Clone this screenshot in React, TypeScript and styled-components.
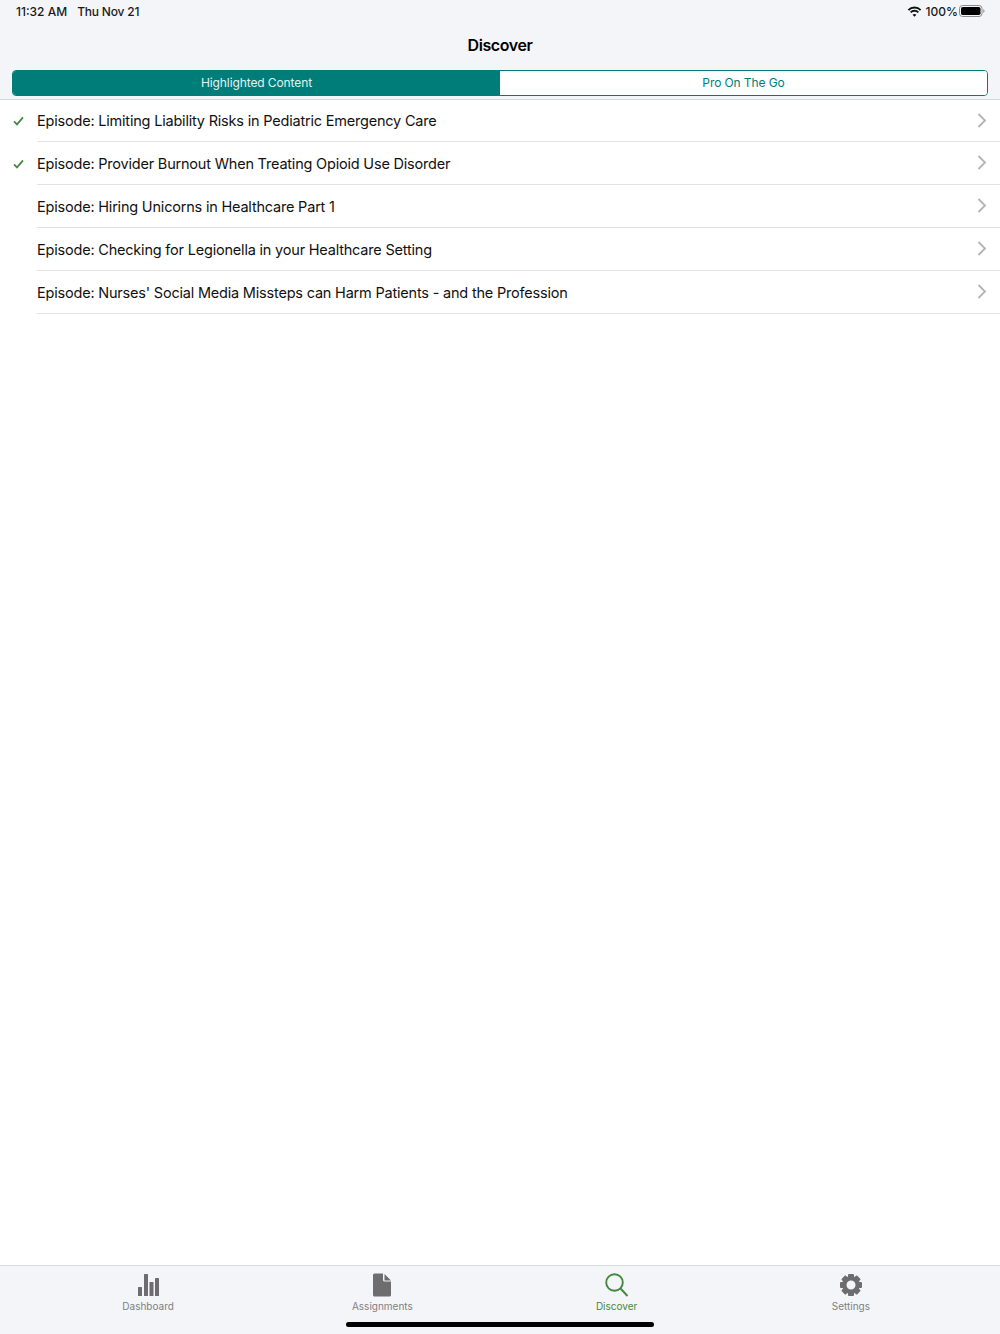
import React from 'react';
import styled, { createGlobalStyle } from 'styled-components';

const TEAL = '#007d78';
const GREEN = '#44883e';
const GREY = '#6d6d6f';

const GlobalStyle = createGlobalStyle`
  html, body {
    margin: 0;
    padding: 0;
    background: #fff;
  }
  body {
    font-family: Inter, "Noto Sans", "Liberation Sans", sans-serif;
    color: #111;
  }
`;

const Screen = styled.div`
  width: 1000px;
  height: 1334px;
  display: flex;
  flex-direction: column;
  overflow: hidden;
`;

const Header = styled.header`
  height: 99px;
  background: #f4f5f9;
  border-bottom: 1px solid #d9d9dc;
  display: flex;
  flex-direction: column;
  flex-shrink: 0;
`;

const StatusBar = styled.div`
  height: 22px;
  padding: 0 15px 0 16px;
  display: flex;
  align-items: center;
  justify-content: space-between;
  font-size: 12px;
  font-weight: 500;
  color: #1a1a1a;
`;

const StatusLeft = styled.div`
  display: flex;
  gap: 10px;
`;

const StatusDate = styled.span`
  letter-spacing: -0.2px;
`;

const StatusRight = styled.div`
  display: flex;
  align-items: center;
  gap: 1px;
`;

const WifiIcon = styled.svg`
  width: 15px;
  height: 11px;
  margin-right: 3px;
`;

const NavTitle = styled.h1`
  margin: 0;
  height: 46px;
  line-height: 46px;
  text-align: center;
  font-size: 16px;
  font-weight: 600;
  letter-spacing: -0.4px;
  color: #000;
`;

const Segments = styled.div`
  margin: 2px 12px 0;
  height: 26px;
  display: grid;
  grid-template-columns: 1fr 1fr;
  border-radius: 4px;
  overflow: hidden;
  border: 1px solid ${TEAL};
  box-sizing: border-box;
`;

const Segment = styled.div<{ $active?: boolean }>`
  display: flex;
  align-items: center;
  justify-content: center;
  padding-bottom: 1px;
  font-size: 12px;
  letter-spacing: -0.1px;
  background: ${(p) => (p.$active ? TEAL : '#fff')};
  color: ${(p) => (p.$active ? '#e4f2f1' : TEAL)};
`;

const List = styled.ul`
  list-style: none;
  margin: 0;
  padding: 0;
  flex: 1;
  background: #fff;
`;

const Row = styled.li`
  height: 43px;
  display: flex;
  align-items: stretch;

  &:first-child {
    height: 42px;
  }
`;

const CheckSlot = styled.div`
  width: 37px;
  flex-shrink: 0;
  padding-left: 13px;
  box-sizing: border-box;
  display: flex;
  align-items: center;
`;

const RowBody = styled.div`
  flex: 1;
  display: flex;
  align-items: center;
  justify-content: space-between;
  padding-right: 13px;
  border-bottom: 1px solid #e2e2e4;
  box-sizing: border-box;
`;

const RowTitle = styled.span`
  font-size: 14.5px;
  letter-spacing: -0.2px;
  color: #111;
`;

const TabBar = styled.nav`
  height: 69px;
  flex-shrink: 0;
  background: #f4f5f9;
  border-top: 1px solid #dcdde0;
  box-sizing: border-box;
  display: flex;
  flex-direction: column;
  align-items: center;
`;

const Tabs = styled.div`
  width: 100%;
  padding: 7px 32px 0 31px;
  box-sizing: border-box;
  display: grid;
  grid-template-columns: repeat(4, 1fr);
`;

const Tab = styled.div<{ $active?: boolean }>`
  display: flex;
  flex-direction: column;
  align-items: center;
  gap: 3px;
  font-size: 10px;
  line-height: 13px;
  color: ${(p) => (p.$active ? GREEN : '#808083')};
`;

const TabIcon = styled.svg`
  width: 26px;
  height: 24px;
  display: block;
`;

const HomeBar = styled.div`
  width: 308px;
  height: 5px;
  margin-top: 9px;
  border-radius: 3px;
  background: #000;
`;

const Check = () => (
  <svg width="11" height="10" viewBox="0 0 11 10" fill="none">
    <path d="M1 5.4 4 8.4 10 1.4" stroke={GREEN} strokeWidth="1.7" />
  </svg>
);

const Chevron = () => (
  <svg width="10" height="16" viewBox="0 0 10 16" fill="none">
    <path d="M1.5 1 8 7.500 1.500 14" stroke="#b3b3b8" strokeWidth="1.8" />
  </svg>
);

const Wifi = () => (
  <WifiIcon viewBox="0 0 15 11" fill="#111">
    <path d="M7.5 2.6c2.1 0 4 .8 5.4 2.2l1.4-1.4A9.4 9.4 0 0 0 7.500.5 9.400 9.400 0 0 0 .7 3.400l1.400 1.400A7.700 7.700 0 0 1 7.500 2.600z" />
    <path d="M7.500 5.700c1.200 0 2.300.5 3.200 1.300l1.300-1.300a6.300 6.300 0 0 0-9 0L4.300 7c.9-.8 2-1.300 3.200-1.300z" />
    <path d="M7.500 7.900c-.7 0-1.300.3-1.900.8l1.900 2 1.900-2c-.6-.5-1.200-.8-1.900-.8z" />
  </WifiIcon>
);

const Battery = () => (
  <svg width="26" height="12" viewBox="0 0 26 12">
    <rect x="0.5" y="0.5" width="22.500" height="11" rx="3" fill="none" stroke="#8b8b8d" />
    <rect x="2" y="2" width="19.500" height="8" rx="1.700" fill="#000" />
    <path d="M24.300 4.200c.8.300 1.200 1 1.200 1.800s-.4 1.500-1.200 1.800z" fill="#8b8b8d" />
  </svg>
);

const gearTeeth = [0, 45, 90, 135, 180, 225, 270, 315];

const episodes = [
  { title: 'Episode: Limiting Liability Risks in Pediatric Emergency Care', done: true },
  { title: 'Episode: Provider Burnout When Treating Opioid Use Disorder', done: true },
  { title: 'Episode: Hiring Unicorns in Healthcare Part 1', done: false },
  { title: 'Episode: Checking for Legionella in your Healthcare Setting', done: false },
  { title: "Episode: Nurses' Social Media Missteps can Harm Patients - and the Profession", done: false },
];

const App: React.FC = () => {
  return (
    <Screen>
      <GlobalStyle />
      <Header>
        <StatusBar>
          <StatusLeft>
            <span>11:32 AM</span>
            <StatusDate>Thu Nov 21</StatusDate>
          </StatusLeft>
          <StatusRight>
            <Wifi />
            <span>100%</span>
            <Battery />
          </StatusRight>
        </StatusBar>
        <NavTitle>Discover</NavTitle>
        <Segments>
          <Segment $active>Highlighted Content</Segment>
          <Segment>Pro On The Go</Segment>
        </Segments>
      </Header>
      <List>
        {episodes.map((ep) => (
          <Row key={ep.title}>
            <CheckSlot>{ep.done && <Check />}</CheckSlot>
            <RowBody>
              <RowTitle>{ep.title}</RowTitle>
              <Chevron />
            </RowBody>
          </Row>
        ))}
      </List>
      <TabBar>
        <Tabs>
          <Tab>
            <TabIcon viewBox="0 0 26 24" fill={GREY}>
              <rect x="3" y="14" width="4" height="9" rx="0.500" />
              <rect x="9" y="1" width="4" height="22" rx="0.500" />
              <rect x="14.500" y="9" width="4" height="14" rx="0.500" />
              <rect x="20" y="5" width="4" height="18" rx="0.500" />
            </TabIcon>
            Dashboard
          </Tab>
          <Tab>
            <TabIcon viewBox="0 0 26 24" fill={GREY}>
              <path d="M4 2a1.500 1.500 0 0 1 1.500-1.500H14v6.500a1.500 1.500 0 0 0 1.500 1.500H22v13.500a1.500 1.500 0 0 1-1.500 1.500h-15A1.500 1.500 0 0 1 4 22z" />
              <path d="M15.500 1 22 7.500h-6.500z" />
            </TabIcon>
            Assignments
          </Tab>
          <Tab $active>
            <TabIcon viewBox="0 0 26 24" fill="none" stroke={GREEN} strokeWidth="1.900">
              <circle cx="10.500" cy="9.500" r="8.300" />
              <path d="M16.500 15.500 23.500 23" />
            </TabIcon>
            Discover
          </Tab>
          <Tab>
            <TabIcon viewBox="0 0 26 24" fill={GREY}>
              <circle cx="13" cy="12" r="6.700" fill="none" stroke={GREY} strokeWidth="4.400" />
              {gearTeeth.map((deg) => (
                <rect key={deg} x="10" y="1" width="6" height="5" rx="1" transform={`rotate(${deg} 13 12)`} />
              ))}
            </TabIcon>
            Settings
          </Tab>
        </Tabs>
        <HomeBar />
      </TabBar>
    </Screen>
  );
};

export default App;
